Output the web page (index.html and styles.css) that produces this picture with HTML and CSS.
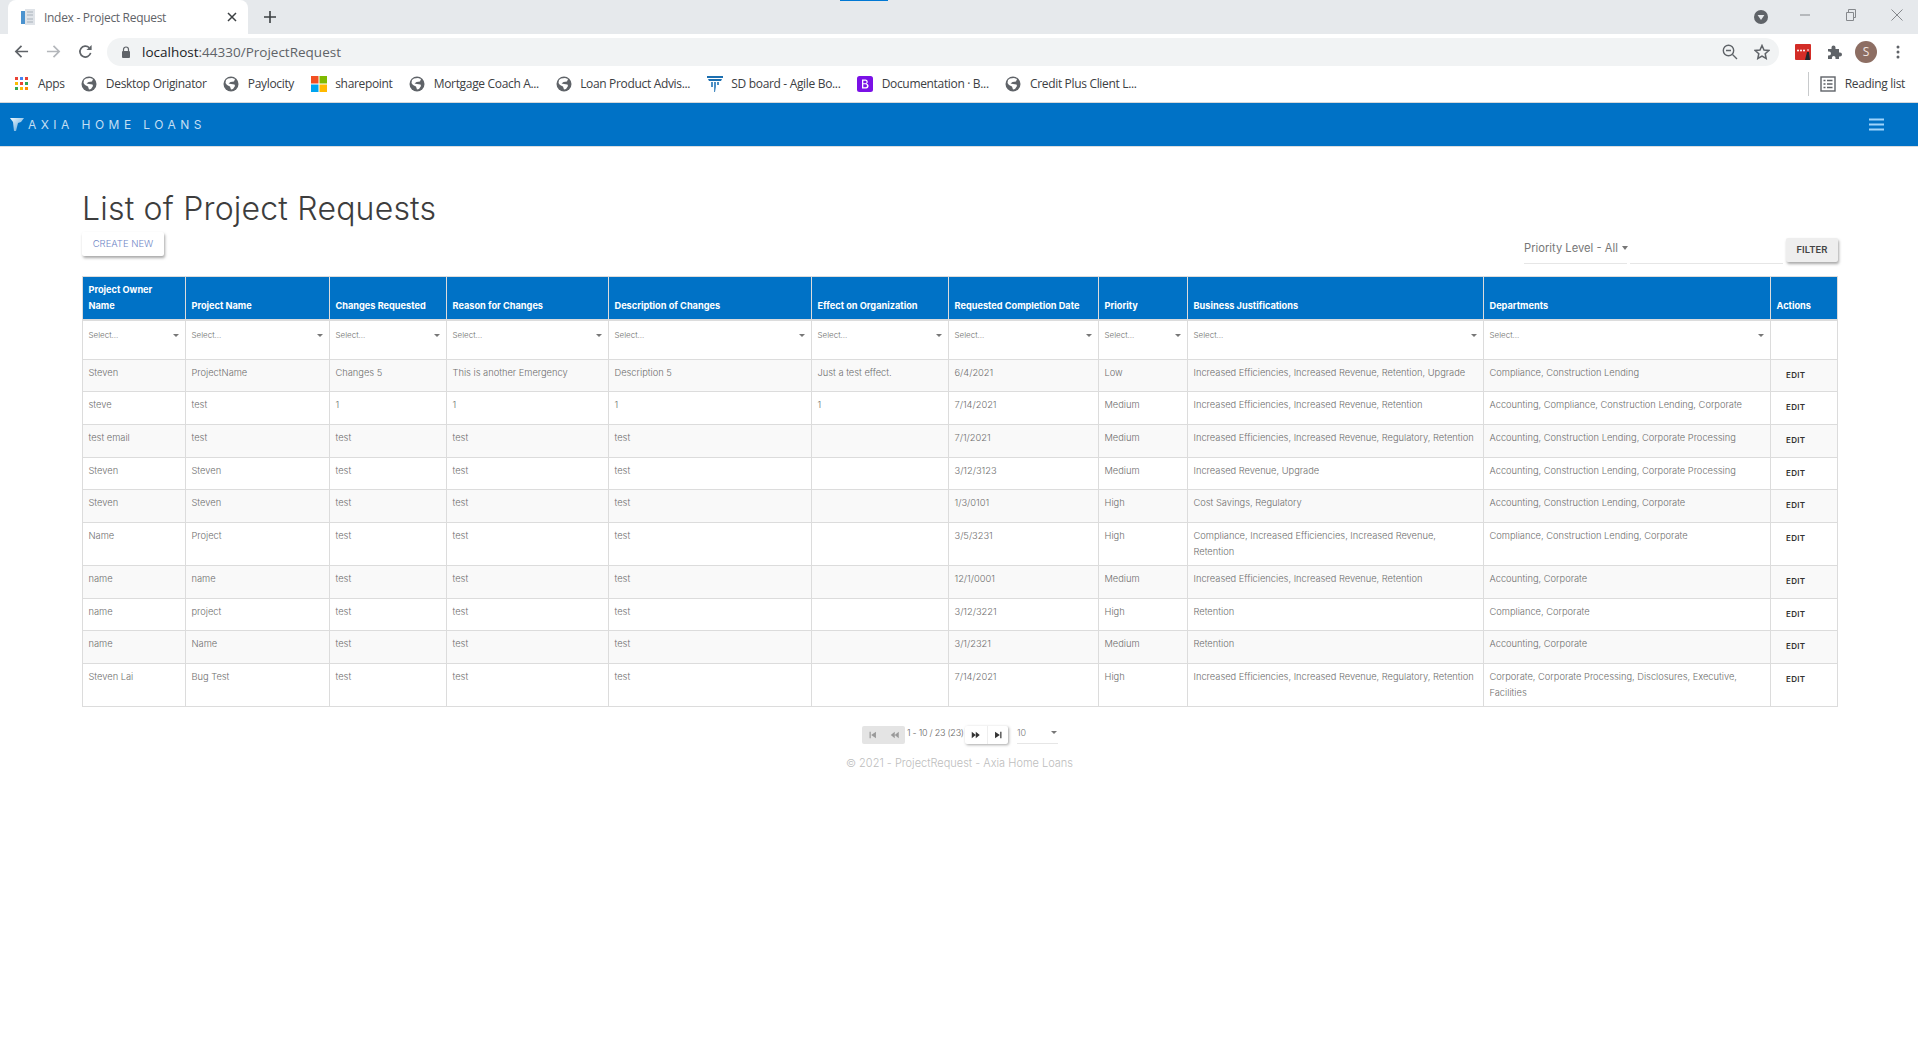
FILE: index.html
```html
<!DOCTYPE html>
<html lang="en">
<head>
<meta charset="utf-8">
<title>Index - Project Request</title>
<link rel="stylesheet" href="styles.css">
</head>
<body>
<svg class="defs" width="0" height="0" aria-hidden="true">
  <symbol id="globe" viewBox="0 0 16 16"><circle cx="8" cy="8" r="7.5" fill="#5f6368"/><path d="M5 2.500 9 2l3 1-1 2.500-3.500.5L5.500 7.500 8 8l3.500.5.500 1.500-2 3-2 .5-1-3-3-1.500-1.500-2L3 4z" fill="#fff"/></symbol>
  <linearGradient id="mark" x1="0" y1="0" x2="1" y2="1"><stop offset="0" stop-color="#f2f8fc"/><stop offset="1" stop-color="#4f9fda"/></linearGradient>
</svg>

<header class="chrome">
  <div class="tabstrip">
    <span class="progress"></span>
    <div class="tab">
      <svg class="tab-icon" viewBox="0 0 16 16"><rect x="5" y="0" width="10" height="16" fill="#dfe3e8"/><rect x="1" y="2" width="4" height="13" fill="#4b93cf"/><path d="M7 3h6M7 6h6M7 10h6M7 13h6" stroke="#a9b2bb"/></svg>
      <span class="tab-title">Index - Project Request</span>
      <svg class="tab-close" viewBox="0 0 10 10"><path d="M1 1l8 8M9 1l-8 8" stroke="#3c4043" stroke-width="1.5"/></svg>
    </div>
    <svg class="new-tab" viewBox="0 0 12 12"><path d="M6 0v12M0 6h12" stroke="#3c4043" stroke-width="1.6"/></svg>
    <svg class="profile-dot" viewBox="0 0 14 14"><circle cx="7" cy="7" r="7" fill="#5f6368"/><path d="M3.6 5h6.8L7 10z" fill="#e6e9ec"/></svg>
    <svg class="win win-min" viewBox="0 0 12 12"><path d="M1 6h10" stroke="#85888c"/></svg>
    <svg class="win" viewBox="0 0 12 12"><path d="M1.5 3.5h7v8h-7zM3.5 3.5v-3h7v8h-2" fill="none" stroke="#85888c"/></svg>
    <svg class="win" viewBox="0 0 12 12"><path d="M.5.5l11 11M11.500.5l-11 11" stroke="#85888c"/></svg>
  </div>
  <div class="toolbar">
    <svg class="tool" viewBox="0 0 16 16"><path d="M15 8H2.500M8 2 2 8l6 6" fill="none" stroke="#5f6368" stroke-width="1.800"/></svg>
    <svg class="tool" viewBox="0 0 16 16"><path d="M1 8h12.500M8 2l6 6-6 6" fill="none" stroke="#b4b7bb" stroke-width="1.800"/></svg>
    <svg class="tool" viewBox="0 0 16 16"><path d="M13.500 9.500A5.800 5.800 0 1 1 12 4" fill="none" stroke="#5f6368" stroke-width="1.800"/><path d="M14.500 1v5.500H9z" fill="#5f6368"/></svg>
    <div class="omnibox">
      <svg class="lock" viewBox="0 0 10 12"><path d="M2.500 5V3.500a2.500 2.500 0 0 1 5 0V5" fill="none" stroke="#5f6368" stroke-width="1.200"/><rect x="1" y="5" width="8" height="7" rx="1" fill="#5f6368"/></svg>
      <span class="url"><span class="url-host">localhost</span>:44330/ProjectRequest</span>
      <svg class="omni-icon zoom-out" viewBox="0 0 16 16"><circle cx="6.500" cy="6.500" r="5.200" fill="none" stroke="#5f6368" stroke-width="1.400"/><path d="M4 6.500h5M10.500 10.500l4.500 4.500" stroke="#5f6368" stroke-width="1.400"/></svg>
      <svg class="omni-icon" viewBox="0 0 16 16"><path d="M8 1.500l2 4.500 4.800.5-3.600 3.200 1 4.800L8 12.100 3.800 14.500l1-4.800L1.200 6.500 6 6z" fill="none" stroke="#5f6368" stroke-width="1.500"/></svg>
    </div>
    <svg class="ext" viewBox="0 0 16 16"><rect width="16" height="16" rx="1" fill="#d32d27"/><circle cx="3" cy="6.500" r="1" fill="#fff"/><circle cx="6" cy="6.500" r="1" fill="#fff"/><circle cx="9" cy="6.500" r="1" fill="#fff"/><path d="M13 5v2" stroke="#fff"/><path d="M12 8h2l1 8h-5z" fill="#20262c"/></svg>
    <svg class="ext" viewBox="0 0 16 16"><path d="M1 5h3.500V3.500a2 2 0 0 1 4 0V5H12v3.500h1a2 2 0 0 1 0 4h-1V15H8.500v-1.300a1.800 1.800 0 0 0-3.600 0V15H1v-3.500h1a2 2 0 0 0 0-4H1z" fill="#5f6368"/></svg>
    <span class="avatar">S</span>
    <svg class="dots" viewBox="0 0 4 16"><circle cx="2" cy="3" r="1.500" fill="#5f6368"/><circle cx="2" cy="8" r="1.500" fill="#5f6368"/><circle cx="2" cy="13" r="1.500" fill="#5f6368"/></svg>
  </div>
  <div class="bookmarks">
    <a class="bm"><svg class="bm-icon apps" viewBox="0 0 14 14"><path d="M0 0h3v3H0z" fill="#ea4335"/><path d="M5 0h3v3H5z" fill="#4285f4"/><path d="M10 0h3v3h-3z" fill="#ea4335"/><path d="M0 5h3v3H0z" fill="#fbbc04"/><path d="M5 5h3v3H5z" fill="#ea4335"/><path d="M10 5h3v3h-3z" fill="#34a853"/><path d="M0 10h3v3H0z" fill="#34a853"/><path d="M5 10h3v3H5z" fill="#fbbc04"/><path d="M10 10h3v3h-3z" fill="#fb8c00"/></svg>Apps</a>
    <a class="bm"><svg class="bm-icon"><use href="#globe"/></svg>Desktop Originator</a>
    <a class="bm"><svg class="bm-icon"><use href="#globe"/></svg>Paylocity</a>
    <a class="bm"><svg class="bm-icon" viewBox="0 0 16 16"><path d="M0 0h7.500v7.500H0z" fill="#f25022"/><path d="M8.500 0H16v7.500H8.500z" fill="#7fba00"/><path d="M0 8.500h7.500V16H0z" fill="#00a4ef"/><path d="M8.500 8.500H16V16H8.500z" fill="#ffb900"/></svg>sharepoint</a>
    <a class="bm"><svg class="bm-icon"><use href="#globe"/></svg>Mortgage Coach A...</a>
    <a class="bm"><svg class="bm-icon"><use href="#globe"/></svg>Loan Product Advis...</a>
    <a class="bm"><svg class="bm-icon" viewBox="0 0 16 16"><path d="M0 0h16v2H0zM1 3h14l-1 2H2z" fill="#1c6fb0"/><path d="M4 6h2v5H4zM7 6h2v5l-1 5H7zM10 6h2v3h-2z" fill="#4c8fc4"/></svg>SD board - Agile Bo...</a>
    <a class="bm"><svg class="bm-icon" viewBox="0 0 16 16"><rect width="16" height="16" rx="2.500" fill="#7a10e6"/><path d="M5 3.500h3.500a2.200 2.200 0 0 1 1 4.200 2.400 2.400 0 0 1-.8 4.800H5zM6.300 4.700v2.500h2a1.250 1.250 0 0 0 0-2.500zM6.300 8.300v3h2.200a1.500 1.500 0 0 0 0-3z" fill="#fff"/></svg>Documentation · B...</a>
    <a class="bm"><svg class="bm-icon"><use href="#globe"/></svg>Credit Plus Client L...</a>
    <div class="reading">
      <svg class="bm-icon" viewBox="0 0 16 16"><rect x="1" y="1" width="14" height="14" fill="none" stroke="#5f6368" stroke-width="1.400"/><path d="M3.500 4.500h2M7 4.500h5.500M3.500 8h2M7 8h5.500M3.500 11.500h2M7 11.500h5.500" stroke="#5f6368" stroke-width="1.300"/></svg>Reading list
    </div>
  </div>
</header>

<nav class="appbar">
  <div class="brand">
    <svg class="brand-mark" viewBox="0 0 14 14"><path d="M0 1h14l-3 4-3 1-2 8-2 0-1-9z" fill="url(#mark)"/></svg>
    <span class="brand-name">AXIA HOME LOANS</span>
  </div>
  <svg class="burger" viewBox="0 0 15 13"><path d="M0 1.500h15M0 6.500h15M0 11.500h15" stroke="#9fd4fb" stroke-width="2.200"/></svg>
</nav>

<main class="page">
  <h1 class="title">List of Project Requests</h1>
  <div class="actions">
    <button class="btn btn-create">CREATE NEW</button>
    <div class="filters">
      <div class="priority">Priority Level - All <span class="caret"></span></div>
      <div class="filter-input"></div>
      <button class="btn btn-filter">FILTER</button>
    </div>
  </div>

  <table class="grid">
    <colgroup>
      <col class="c1"><col class="c2"><col class="c3"><col class="c4"><col class="c5"><col class="c6"><col class="c7"><col class="c8"><col class="c9"><col class="c10"><col class="c11">
    </colgroup>
    <thead>
      <tr>
        <th>Project Owner Name</th><th>Project Name</th><th>Changes Requested</th><th>Reason for Changes</th><th>Description of Changes</th><th>Effect on Organization</th><th>Requested Completion Date</th><th>Priority</th><th>Business Justifications</th><th>Departments</th><th>Actions</th>
      </tr>
      <tr class="filter-row">
        <td><div class="sel">Select...<span class="arrow"></span></div></td>
        <td><div class="sel">Select...<span class="arrow"></span></div></td>
        <td><div class="sel">Select...<span class="arrow"></span></div></td>
        <td><div class="sel">Select...<span class="arrow"></span></div></td>
        <td><div class="sel">Select...<span class="arrow"></span></div></td>
        <td><div class="sel">Select...<span class="arrow"></span></div></td>
        <td><div class="sel">Select...<span class="arrow"></span></div></td>
        <td><div class="sel">Select...<span class="arrow"></span></div></td>
        <td><div class="sel">Select...<span class="arrow"></span></div></td>
        <td><div class="sel">Select...<span class="arrow"></span></div></td>
        <td></td>
      </tr>
    </thead>
    <tbody>
      <tr><td>Steven</td><td>ProjectName</td><td>Changes 5</td><td>This is another Emergency</td><td>Description 5</td><td>Just a test effect.</td><td>6/4/2021</td><td>Low</td><td>Increased Efficiencies, Increased Revenue, Retention, Upgrade</td><td>Compliance, Construction Lending</td><td class="edit-cell"><span class="edit">EDIT</span></td></tr>
      <tr><td>steve</td><td>test</td><td>1</td><td>1</td><td>1</td><td>1</td><td>7/14/2021</td><td>Medium</td><td>Increased Efficiencies, Increased Revenue, Retention</td><td>Accounting, Compliance, Construction Lending, Corporate</td><td class="edit-cell"><span class="edit">EDIT</span></td></tr>
      <tr><td>test email</td><td>test</td><td>test</td><td>test</td><td>test</td><td></td><td>7/1/2021</td><td>Medium</td><td>Increased Efficiencies, Increased Revenue, Regulatory, Retention</td><td>Accounting, Construction Lending, Corporate Processing</td><td class="edit-cell"><span class="edit">EDIT</span></td></tr>
      <tr><td>Steven</td><td>Steven</td><td>test</td><td>test</td><td>test</td><td></td><td>3/12/3123</td><td>Medium</td><td>Increased Revenue, Upgrade</td><td>Accounting, Construction Lending, Corporate Processing</td><td class="edit-cell"><span class="edit">EDIT</span></td></tr>
      <tr><td>Steven</td><td>Steven</td><td>test</td><td>test</td><td>test</td><td></td><td>1/3/0101</td><td>High</td><td>Cost Savings, Regulatory</td><td>Accounting, Construction Lending, Corporate</td><td class="edit-cell"><span class="edit">EDIT</span></td></tr>
      <tr><td>Name</td><td>Project</td><td>test</td><td>test</td><td>test</td><td></td><td>3/5/3231</td><td>High</td><td>Compliance, Increased Efficiencies, Increased Revenue, Retention</td><td>Compliance, Construction Lending, Corporate</td><td class="edit-cell"><span class="edit">EDIT</span></td></tr>
      <tr><td>name</td><td>name</td><td>test</td><td>test</td><td>test</td><td></td><td>12/1/0001</td><td>Medium</td><td>Increased Efficiencies, Increased Revenue, Retention</td><td>Accounting, Corporate</td><td class="edit-cell"><span class="edit">EDIT</span></td></tr>
      <tr><td>name</td><td>project</td><td>test</td><td>test</td><td>test</td><td></td><td>3/12/3221</td><td>High</td><td>Retention</td><td>Compliance, Corporate</td><td class="edit-cell"><span class="edit">EDIT</span></td></tr>
      <tr><td>name</td><td>Name</td><td>test</td><td>test</td><td>test</td><td></td><td>3/1/2321</td><td>Medium</td><td>Retention</td><td>Accounting, Corporate</td><td class="edit-cell"><span class="edit">EDIT</span></td></tr>
      <tr><td>Steven Lai</td><td>Bug Test</td><td>test</td><td>test</td><td>test</td><td></td><td>7/14/2021</td><td>High</td><td>Increased Efficiencies, Increased Revenue, Regulatory, Retention</td><td>Corporate, Corporate Processing, Disclosures, Executive, Facilities</td><td class="edit-cell"><span class="edit">EDIT</span></td></tr>
    </tbody>
  </table>

  <div class="pager">
    <div class="pg-group pg-off">
      <svg class="pg-icon" viewBox="0 0 10 10"><path d="M1 1h1.500v8H1zM9 1v8L3 5z" fill="#9a9a9a"/></svg>
      <svg class="pg-icon" viewBox="0 0 10 10"><path d="M5 1v8L0 5zM10 1v8L5 5z" fill="#9a9a9a"/></svg>
    </div>
    <span class="pg-text">1 - 10 / 23 (23)</span>
    <div class="pg-group pg-on">
      <svg class="pg-icon" viewBox="0 0 10 10"><path d="M0 1v8l5-4zM5 1v8l5-4z" fill="#333"/></svg>
      <svg class="pg-icon pg-sep" viewBox="0 0 10 10"><path d="M1 1v8l6-4zM7.500 1H9v8H7.500z" fill="#333"/></svg>
    </div>
    <div class="pg-size">10<span class="arrow"></span></div>
  </div>
  <footer class="copy">© 2021 - ProjectRequest - Axia Home Loans</footer>
</main>
</body>
</html>
```
FILE: styles.css
```css
* { box-sizing: border-box; }
html, body { margin: 0; padding: 0; background: #fff; }
body { font-family: "Inter", "Open Sans", sans-serif; color: #777; overflow: hidden; height: 1039px; }
.defs { position: absolute; }

.chrome { font-family: "Open Sans", "Noto Sans", sans-serif; color: #3c4043; }
.tabstrip { position: relative; height: 34px; background: #e6e9ec; display: flex; align-items: center; padding-left: 8px; }
.progress { position: absolute; left: 840px; top: 0; width: 48px; height: 1px; background: #0078d4; }
.tab { width: 240px; height: 34px; background: #fff; border-radius: 8px 8px 0 0; display: flex; align-items: center; padding: 0 12px; }
.tab-icon { width: 16px; height: 16px; margin-right: 8px; }
.tab-title { font-size: 12px; color: #5f6368; letter-spacing: -.3px; flex: 1; }
.tab-close { width: 10px; height: 10px; margin-right: -1px; }
.new-tab { width: 12px; height: 12px; margin-left: 16px; }
.profile-dot { width: 14px; height: 14px; margin-left: auto; margin-right: 31px; }
.win { width: 12px; height: 12px; margin-right: 34px; position: relative; top: -2px; }
.win:last-child { margin-right: 15px; }

.toolbar { height: 34px; background: #fff; display: flex; align-items: center; padding: 1px 0 0 14px; }
.tool { width: 15px; height: 15px; margin-right: 17px; }
.omnibox { width: 1672px; margin-left: -3px; height: 28px; background: #f1f3f4; border-radius: 14px; display: flex; align-items: center; padding: 0 9px 0 14px; }
.lock { width: 10px; height: 12px; margin-right: 11px; }
.url { font-size: 13.500px; color: #5f6368; flex: 1; }
.url-host { color: #202124; }
.omni-icon { width: 16px; height: 16px; margin-left: 16px; }
.ext { width: 16px; height: 16px; margin-left: 16px; flex: none; }
.ext:first-of-type { margin-left: 12px; }
.avatar { width: 22px; height: 22px; border-radius: 50%; background: #8d6e63; color: #f2e6e2; font-size: 12px; display: flex; align-items: center; justify-content: center; margin-left: 12px; }
.dots { width: 4px; height: 16px; margin-left: 19px; }

.bookmarks { height: 35px; background: #fff; border-bottom: 1px solid #d6d8da; display: flex; align-items: center; padding: 0 0 3px 15px; gap: 16.700px; font-size: 12px; color: #3c4043; letter-spacing: -.33px; }
.bm { display: flex; align-items: center; white-space: nowrap; }
.bm-icon { width: 16px; height: 16px; margin-right: 8.500px; flex: none; }
.bm-icon.apps { width: 14px; height: 14px; margin-right: 9px; }
.reading { margin-left: auto; margin-right: 13px; padding-left: 11px; height: 24px; border-left: 1px solid #c8cacc; display: flex; align-items: center; white-space: nowrap; }

.appbar { height: 44px; background: #0072c6; border-bottom: 1px solid #d9dde0; display: flex; align-items: center; justify-content: space-between; padding: 0 34px 1px 10px; }
.brand { display: flex; align-items: center; }
.brand-mark { width: 14px; height: 14px; margin-right: 4px; }
.brand-name { font-size: 12px; letter-spacing: 4.450px; color: #c4dff3; }
.burger { width: 15px; height: 13px; }

.page { padding: 43px 81px 0 82px; }
.title { margin: 0; font-size: 32px; line-height: 38px; font-weight: 300; color: #3d3d3d; letter-spacing: .2px; }
.actions { display: flex; justify-content: space-between; align-items: flex-start; height: 44px; margin-top: 4px; }
.btn { border: 0; font-family: inherit; font-size: 9.500px; border-radius: 2px; box-shadow: 1px 2px 3px rgba(0,0,0,.35); height: 24px; padding: 0 0 2px; cursor: pointer; }
.btn-create { background: #fff; color: #6f86c6; width: 82px; font-weight: 300; }
.filters { display: flex; align-items: flex-start; margin: 6px -1px 0 0; }
.priority { width: 103px; height: 26px; border-bottom: 1px solid #e6e6e6; padding-top: 1px; font-size: 11.200px; line-height: 18px; color: #777; white-space: nowrap; }
.caret { display: inline-block; border: 3px solid transparent; border-top: 4px solid #777; border-bottom: 0; vertical-align: 2px; margin-left: 1px; }
.filter-input { width: 153px; height: 26px; border-bottom: 1px solid #e6e6e6; margin-left: 3px; }
.btn-filter { width: 52px; background: #eee; color: #444; font-weight: 600; margin-left: 3px; }

.grid { border-collapse: collapse; table-layout: fixed; width: 1755px; font-size: 9.300px; line-height: 16px; }
.c1 { width: 103px; } .c2 { width: 144px; } .c3 { width: 117px; } .c4 { width: 162px; }
.c5 { width: 203px; } .c6 { width: 137px; } .c7 { width: 150px; } .c8 { width: 89px; }
.c9 { width: 296px; } .c10 { width: 287px; } .c11 { width: 67px; }
.grid th, .grid td { border: 1px solid #dcdcdc; padding: 5px 5.500px 5px; text-align: left; }
.grid th { background: #0072c6; color: #fff; font-weight: 700; font-size: 9.200px; vertical-align: bottom; border-bottom-width: 2px; height: 43px; }
.grid td { vertical-align: top; color: #6e6e6e; font-weight: 300; height: 32.700px; }
.grid tbody tr:nth-child(odd) td { background: #f9f9f9; }
.filter-row td { height: 39px; padding-top: 6px; }
.sel { display: flex; justify-content: space-between; align-items: center; padding-right: 1px; font-size: 8px; }
.arrow { display: inline-block; border: 3px solid transparent; border-top: 3px solid #777; border-bottom: 0; }
.edit-cell { padding-left: 15px !important; padding-top: 9px !important; }
.edit { display: block; font-size: 8px; line-height: 12px; font-weight: 600; color: #333; letter-spacing: .3px; }

.pager { display: flex; align-items: flex-start; margin-top: 19px; padding-left: 780px; font-size: 9px; font-weight: 300; }
.pg-group { display: flex; width: 43px; height: 18px; border-radius: 2px; }
.pg-off { background: #e4e4e4; }
.pg-on { background: #fff; box-shadow: 1px 1px 3px rgba(0,0,0,.35); }
.pg-icon { width: 21.500px; height: 18px; padding: 5px 6px; }
.pg-sep { border-left: 1px solid #eee; }
.pg-text { width: 60px; padding-left: 2px; line-height: 14px; white-space: nowrap; color: #666; letter-spacing: -.25px; }
.pg-size { width: 41px; height: 18px; margin-left: 9px; border-bottom: 1px solid #e6e6e6; display: flex; justify-content: space-between; align-items: center; padding: 0 1px 4px 0; font-size: 9px; }
.copy { margin-top: 11px; text-align: center; font-size: 11px; line-height: 16px; color: #bdbdbd; font-weight: 300; }
```
